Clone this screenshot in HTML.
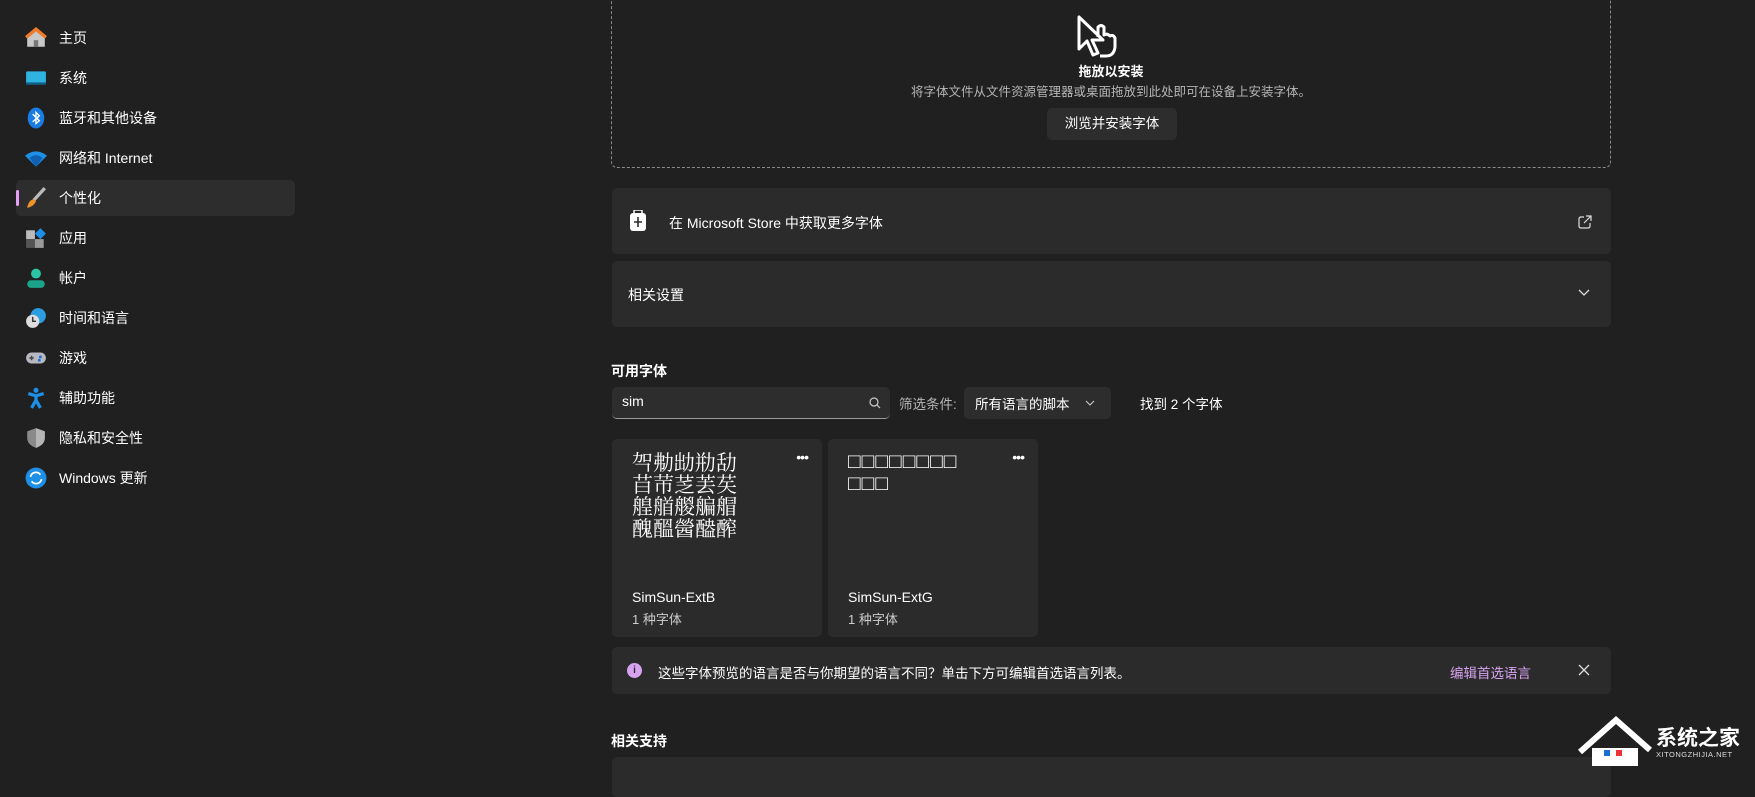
<!DOCTYPE html>
<html><head><meta charset="utf-8"><style>
*{margin:0;padding:0;box-sizing:border-box}
body{width:1755px;height:769px;background:#202020;color:#fff;font-family:"Liberation Sans","Noto Sans CJK SC",sans-serif;font-size:14px;position:relative;overflow:hidden}
.a{position:absolute}
.nav{position:absolute;left:16px;width:279px;height:36px;display:flex;align-items:center;border-radius:5px}
.nav .ic{position:absolute;left:9px;top:7px;width:22px;height:22px}
.nav span{position:absolute;left:43px;font-size:14px}
.card{position:absolute;background:#2b2b2b;border-radius:5px}
.fc{position:absolute;top:439px;width:210px;height:198px;background:#2b2b2b;border-radius:5px}
.fc .pv{position:absolute;left:20px;top:12px;font-family:"Noto Serif CJK SC",serif;font-size:21px;line-height:22px;width:120px}
.fc .nm{position:absolute;left:20px;top:150px;font-size:14px}
.fc .ct{position:absolute;left:20px;top:170px;font-size:13px;color:#ccc}
.fc .dots{position:absolute;right:14px;top:10px;font-size:14px;letter-spacing:-1px}
</style></head><body>

<div class="nav" style="top:20px"><svg class="ic" viewBox="0 0 20 20"><path d="M2 9L10 2L18 9V18H2Z" fill="#c8c8c8"/><path d="M1 9.5L10 2L19 9.5" stroke="#f07b2a" stroke-width="3" fill="none"/><rect x="8" y="12" width="4" height="6" fill="#777"/></svg><span>主页</span></div>
<div class="nav" style="top:60px"><svg class="ic" viewBox="0 0 20 20"><rect x="1" y="4" width="18" height="12" rx="1" fill="#2fb3e0"/><rect x="1" y="14" width="18" height="2" fill="#0d5f86"/></svg><span>系统</span></div>
<div class="nav" style="top:100px"><svg class="ic" viewBox="0 0 20 20"><ellipse cx="10" cy="10" rx="7.5" ry="9.5" fill="#1a7de6"/><path d="M7 6.5L13 12.5L10 15V5L13 8L7 13.5" stroke="#fff" stroke-width="1.3" fill="none"/></svg><span>蓝牙和其他设备</span></div>
<div class="nav" style="top:140px"><svg class="ic" viewBox="0 0 20 20"><path d="M0 8Q10 0 20 8L10 18Z" fill="#1e8fe6"/><path d="M4 10Q10 5 16 10L10 18Z" fill="#0f5fb3"/></svg><span>网络和 Internet</span></div>
<div class="nav" style="top:180px;background:#2d2d2d"><div class="a" style="left:0;top:10px;width:3px;height:16px;background:#e4a0f5;border-radius:2px"></div><svg class="ic" viewBox="0 0 20 20"><path d="M18 1L8 12" stroke="#bbb" stroke-width="3"/><path d="M2 19Q3 12 8 11L10 13Q8 18 2 19Z" fill="#f0902a"/></svg><span>个性化</span></div>
<div class="nav" style="top:220px"><svg class="ic" viewBox="0 0 20 20"><rect x="1" y="3" width="8" height="8" fill="#bbb"/><rect x="1" y="11" width="8" height="8" fill="#555"/><rect x="9" y="11" width="8" height="8" fill="#999"/><path d="M14 1L19 6L14 11L9 6Z" fill="#1e8fe6"/></svg><span>应用</span></div>
<div class="nav" style="top:260px"><svg class="ic" viewBox="0 0 20 20"><circle cx="10" cy="6" r="4.5" fill="#2bc4a4"/><rect x="2" y="12" width="16" height="7" rx="3.5" fill="#1aa389"/></svg><span>帐户</span></div>
<div class="nav" style="top:300px"><svg class="ic" viewBox="0 0 20 20"><circle cx="12" cy="8" r="7" fill="#2c9ee0"/><circle cx="7" cy="13" r="6" fill="#ddd"/><path d="M7 9V13H10" stroke="#333" stroke-width="1.3" fill="none"/></svg><span>时间和语言</span></div>
<div class="nav" style="top:340px"><svg class="ic" viewBox="0 0 20 20"><rect x="1" y="5" width="18" height="10" rx="5" fill="#b8b8c0"/><path d="M4 10H8M6 8V12" stroke="#444" stroke-width="1.3"/><circle cx="14" cy="9" r="1.3" fill="#1e6fd6"/><circle cx="13" cy="12" r="1.3" fill="#1e6fd6"/></svg><span>游戏</span></div>
<div class="nav" style="top:380px"><svg class="ic" viewBox="0 0 20 20"><circle cx="10" cy="3" r="2.3" fill="#1e8fe6"/><path d="M3 6L10 8L17 6M10 8V12L6 19M10 12L14 19" stroke="#1e8fe6" stroke-width="3" fill="none"/></svg><span>辅助功能</span></div>
<div class="nav" style="top:420px"><svg class="ic" viewBox="0 0 20 20"><path d="M10 1L18 4V10Q18 16 10 19Q2 16 2 10V4Z" fill="#8a8a8a"/><path d="M10 1L18 4V10Q18 16 10 19Z" fill="#b5b5b5"/></svg><span>隐私和安全性</span></div>
<div class="nav" style="top:460px"><svg class="ic" viewBox="0 0 20 20"><circle cx="10" cy="10" r="9.5" fill="#1e8fe6"/><path d="M5 9A5 5 0 0 1 14 7M15 11A5 5 0 0 1 6 13" stroke="#fff" stroke-width="1.6" fill="none"/></svg><span>Windows 更新</span></div>

<div class="a" style="left:611px;top:-4px;width:1000px;height:172px;border:1px dashed #8a8a8a;border-radius:6px"></div>
<svg class="a" style="left:1076px;top:15px" width="52" height="44" viewBox="0 0 52 44"><path d="M3 2L3 34L11 26L17 40L22 38L16 25L27 25Z" fill="none" stroke="#fff" stroke-width="3" stroke-linejoin="round"/><path d="M22 22L22 12Q25 9 28 12V20Q31 18 34 21Q37 19 39 23V32Q38 41 30 41H24" fill="none" stroke="#fff" stroke-width="3" stroke-linejoin="round"/></svg>
<div class="a" style="left:611px;width:1000px;top:61px;text-align:center;font-size:13px;font-weight:bold">拖放以安装</div>
<div class="a" style="left:611px;width:1000px;top:81px;text-align:center;font-size:12.5px;color:#b5b5b5">将字体文件从文件资源管理器或桌面拖放到此处即可在设备上安装字体。</div>
<div class="a" style="left:1047px;top:108px;width:130px;height:32px;background:#2d2d2d;border-radius:5px;text-align:center;line-height:32px;font-size:13.5px">浏览并安装字体</div>

<div class="card" style="left:612px;top:188px;width:999px;height:66px"></div>
<svg class="a" style="left:629px;top:210px" width="18" height="22" viewBox="0 0 18 22"><rect x="1" y="3" width="16" height="18" rx="3" fill="#fff"/><rect x="5" y="0" width="8" height="4" rx="1" fill="none" stroke="#fff" stroke-width="1.5"/><path d="M9 7V17M5 12H13" stroke="#2b2b2b" stroke-width="1.6"/></svg>
<div class="a" style="left:669px;top:213px;font-size:14px">在 Microsoft Store 中获取更多字体</div>
<svg class="a" style="left:1577px;top:214px" width="16" height="16" viewBox="0 0 16 16"><path d="M7 3H4Q2 3 2 5V12Q2 14 4 14H11Q13 14 13 12V9M9 2H14V7M14 2L7 9" stroke="#ddd" stroke-width="1.2" fill="none"/></svg>

<div class="card" style="left:612px;top:261px;width:999px;height:66px"></div>
<div class="a" style="left:628px;top:285px;font-size:14px">相关设置</div>
<svg class="a" style="left:1577px;top:288px" width="14" height="10" viewBox="0 0 14 10"><path d="M2 2L7 7L12 2" stroke="#ddd" stroke-width="1.3" fill="none"/></svg>

<div class="a" style="left:611px;top:361px;font-size:14px;font-weight:bold">可用字体</div>
<div class="a" style="left:612px;top:387px;width:278px;height:32px;background:#2d2d2d;border-radius:5px;border-bottom:1.5px solid #9a9a9a"></div>
<div class="a" style="left:622px;top:393px;font-size:14px">sim</div>
<svg class="a" style="left:868px;top:396px" width="14" height="14" viewBox="0 0 14 14"><circle cx="6" cy="6" r="4" stroke="#ccc" stroke-width="1.2" fill="none"/><path d="M9 9L12 12" stroke="#ccc" stroke-width="1.2"/></svg>
<div class="a" style="left:899px;top:393px;font-size:13.5px;color:#b5b5b5">筛选条件:</div>
<div class="a" style="left:964px;top:387px;width:147px;height:32px;background:#2d2d2d;border-radius:5px"></div>
<div class="a" style="left:975px;top:393px;font-size:13.5px">所有语言的脚本</div>
<svg class="a" style="left:1085px;top:399px" width="10" height="8" viewBox="0 0 10 8"><path d="M1 2L5 6L9 2" stroke="#ccc" stroke-width="1.1" fill="none"/></svg>
<div class="a" style="left:1140px;top:393px;font-size:13.5px">找到 2 个字体</div>

<div class="fc" style="left:612px"><div class="pv">㔖㔗㔘㔙㔚<br>䒤䒥䒦䒧䒨<br>艎艏艐艑艒<br>醜醞醟醠醡</div><div class="dots">•••</div><div class="nm">SimSun-ExtB</div><div class="ct">1 种字体</div></div>
<div class="fc" style="left:828px"><div class="pv" style="font-family:'Liberation Sans',sans-serif;width:150px;letter-spacing:1px">□□□□□□□□<br>□□□</div><div class="dots">•••</div><div class="nm">SimSun-ExtG</div><div class="ct">1 种字体</div></div>

<div class="card" style="left:612px;top:647px;width:999px;height:47px"></div>
<div class="a" style="left:627px;top:663px;width:15px;height:15px;border-radius:50%;background:#d7a3f0;color:#2b2b2b;font-size:10px;text-align:center;line-height:15px;font-weight:bold">i</div>
<div class="a" style="left:658px;top:662px;font-size:13.5px">这些字体预览的语言是否与你期望的语言不同？单击下方可编辑首选语言列表。</div>
<div class="a" style="left:1450px;top:662px;font-size:13.5px;color:#d7a3f0">编辑首选语言</div>
<svg class="a" style="left:1578px;top:664px" width="12" height="12" viewBox="0 0 12 12"><path d="M1 1L11 11M11 1L1 11" stroke="#ddd" stroke-width="1.3"/></svg>

<div class="a" style="left:611px;top:731px;font-size:14px;font-weight:bold">相关支持</div>
<div class="card" style="left:612px;top:757px;width:999px;height:40px"></div>
<svg class="a" style="left:1578px;top:712px" width="75" height="55" viewBox="0 0 75 55"><path d="M2 40L38 8L72 38" stroke="#fff" stroke-width="6" fill="none"/><path d="M14 36V54H60V36" fill="#fff"/><rect x="26" y="38" width="6" height="6" fill="#1a6fd0"/><rect x="38" y="38" width="6" height="6" fill="#e33"/></svg>
<div class="a" style="left:1656px;top:722px;font-size:21px;font-weight:bold;color:#fff">系统之家</div>
<div class="a" style="left:1656px;top:750px;font-size:7.5px;color:#ddd;letter-spacing:0.5px">XITONGZHIJIA.NET</div>
</body></html>
